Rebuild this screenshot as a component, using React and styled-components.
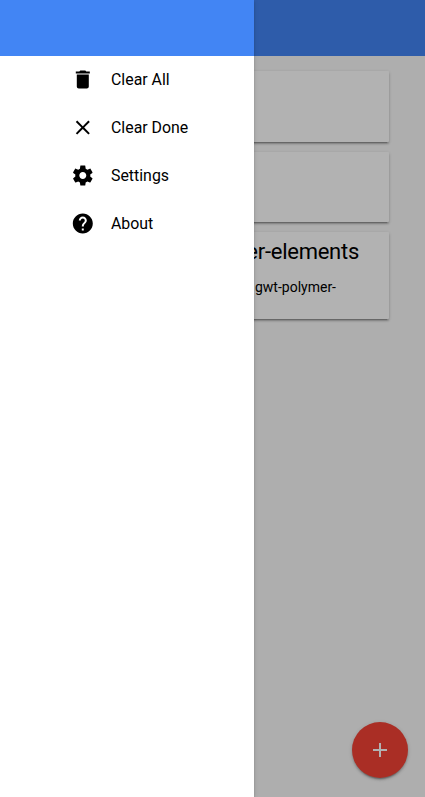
import React from "react";
import styled, { createGlobalStyle } from "styled-components";

const GlobalStyle = createGlobalStyle`
  * { box-sizing: border-box; }
  body { margin: 0; font-family: Roboto, "Noto Sans", sans-serif; color: #000; }
`;

const Screen = styled.div`
  position: relative;
  display: flex;
  flex-direction: column;
  height: 100vh;
  min-height: 797px;
  overflow: hidden;
  background: #fafafa;
`;

const Toolbar = styled.header`
  flex: none;
  height: 56px;
  background: #4285f4;
`;

const CardList = styled.main`
  display: flex;
  flex-direction: column;
  gap: 10px;
  padding: 15px 36px;
`;

const Card = styled.article`
  height: ${(p) => p.$height}px;
  padding: 6px 30px 0 216px;
  background: #fff;
  border-radius: 1px;
  box-shadow: 0 2px 2px 0 rgba(0, 0, 0, 0.2),
    0 1px 4px 0 rgba(0, 0, 0, 0.14),
    0 3px 1px -2px rgba(0, 0, 0, 0.2);
`;

const CardTitle = styled.h2`
  display: flex;
  justify-content: flex-end;
  margin: 0;
  font-size: 22px;
  letter-spacing: -0.012em;
  line-height: 28px;
  font-weight: 400;
  white-space: nowrap;
`;

const CardText = styled.p`
  display: flex;
  justify-content: flex-end;
  margin: 11px 23px 0 0;
  font-size: 14px;
  line-height: 20px;
  white-space: nowrap;
`;

const AddButton = styled.button`
  position: absolute;
  right: 17px;
  bottom: 19px;
  display: flex;
  align-items: center;
  justify-content: center;
  width: 56px;
  height: 56px;
  padding: 0;
  border: 0;
  border-radius: 50%;
  background: #f44336;
  color: #fff;
  box-shadow: 0 2px 2px 0 rgba(0, 0, 0, 0.18),
    0 1px 5px 0 rgba(0, 0, 0, 0.14),
    0 3px 1px -2px rgba(0, 0, 0, 0.2);
`;

const Scrim = styled.div`
  position: absolute;
  inset: 0;
  background: rgba(0, 0, 0, 0.3);
`;

const Drawer = styled.aside`
  position: absolute;
  inset: 0 auto 0 0;
  width: 254px;
  background: #fff;
  box-shadow: 0 2px 2px 0 rgba(0, 0, 0, 0.14),
    0 1px 5px 0 rgba(0, 0, 0, 0.12),
    0 3px 1px -2px rgba(0, 0, 0, 0.2);
`;

const Menu = styled.nav`
  display: flex;
  flex-direction: column;
  padding-left: 71px;
`;

const MenuItem = styled.a`
  display: flex;
  align-items: center;
  gap: 16px;
  height: 48px;
  font-size: 15.9px;
  line-height: 24px;
`;

const Glyph = styled.svg`
  flex: none;
  width: 24px;
  height: 24px;
  fill: currentColor;
`;

const icons = {
  trash: "M6 19c0 1.1.9 2 2 2h8c1.1 0 2-.9 2-2V7H6v12zM19 4h-3.5l-1-1h-5l-1 1H5v2h14V4z",
  close: "M19 6.41L17.59 5 12 10.59 6.41 5 5 6.41 10.59 12 5 17.59 6.41 19 12 13.41 17.59 19 19 17.59 13.41 12z",
  settings:
    "M19.43 12.98c.04-.32.07-.64.07-.98s-.03-.66-.07-.98l2.11-1.65c.19-.15.24-.42.12-.64l-2-3.46c-.12-.22-.39-.3-.61-.22l-2.49 1c-.52-.4-1.08-.73-1.69-.98l-.38-2.65C14.46 2.18 14.25 2 14 2h-4c-.25 0-.46.18-.49.42l-.38 2.65c-.61.25-1.17.59-1.69.98l-2.49-1c-.23-.09-.49 0-.61.22l-2 3.46c-.13.22-.07.49.12.64l2.11 1.65c-.04.32-.07.65-.07.98s.03.66.07.98l-2.11 1.65c-.19.15-.24.42-.12.64l2 3.46c.12.22.39.3.61.22l2.49-1c.52.4 1.08.73 1.69.98l.38 2.65c.03.24.24.42.49.42h4c.25 0 .46-.18.49-.42l.38-2.65c.61-.25 1.17-.59 1.69-.98l2.49 1c.23.09.49 0 .61-.22l2-3.46c.12-.22.07-.49-.12-.64l-2.11-1.65zM12 15.5c-1.93 0-3.5-1.57-3.5-3.5s1.57-3.5 3.5-3.5 3.5 1.57 3.5 3.5-1.57 3.5-3.5 3.5z",
  help: "M12 2C6.48 2 2 6.48 2 12s4.48 10 10 10 10-4.48 10-10S17.52 2 12 2zm1 17h-2v-2h2v2zm2.07-7.75l-.9.92C13.45 12.9 13 13.5 13 15h-2v-.5c0-1.1.45-2.1 1.17-2.83l1.24-1.26c.37-.36.59-.86.59-1.41 0-1.1-.9-2-2-2s-2 .9-2 2H8c0-2.21 1.79-4 4-4s4 1.79 4 4c0 .88-.36 1.68-.93 2.25z",
  add: "M19 13h-6v6h-2v-6H5v-2h6V5h2v6h6v2z",
};

const menuItems = [
  { icon: "trash", label: "Clear All" },
  { icon: "close", label: "Clear Done" },
  { icon: "settings", label: "Settings" },
  { icon: "help", label: "About" },
];

function Icon({ name, viewBox = "0 0 24 24" }) {
  return (
    <Glyph viewBox={viewBox} aria-hidden="true">
      <path d={icons[name]} />
    </Glyph>
  );
}

export default function App() {
  return (
    <>
      <GlobalStyle />
      <Screen>
        <Toolbar />
        <CardList>
          <Card $height={70.6} />
          <Card $height={70.6} />
          <Card $height={86.4}>
            <CardTitle>er-elements</CardTitle>
            <CardText>gwt-polymer-</CardText>
          </Card>
        </CardList>
        <AddButton aria-label="Add">
          <Icon name="add" />
        </AddButton>
        <Scrim />
        <Drawer>
          <Toolbar />
          <Menu>
            {menuItems.map((item) => (
              <MenuItem key={item.label}>
                <Icon name={item.icon} viewBox="0.2 0.4 24 24" />
                {item.label}
              </MenuItem>
            ))}
          </Menu>
        </Drawer>
      </Screen>
    </>
  );
}
